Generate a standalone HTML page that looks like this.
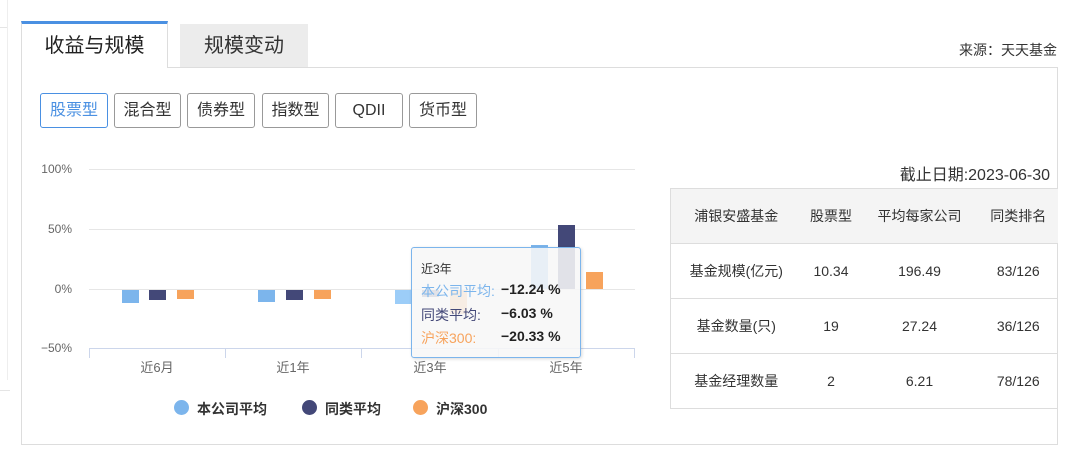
<!DOCTYPE html>
<html><head><meta charset="utf-8"><style>
*{margin:0;padding:0;box-sizing:border-box}
body{width:1069px;height:464px;background:#fff;position:relative;overflow:hidden;font-family:"Liberation Sans","Noto Sans CJK SC",sans-serif;color:#333}
.a{position:absolute}
.box{left:21px;top:67px;width:1037px;height:378px;border:1px solid #ddd}
.tab1{left:21px;top:21px;width:147px;height:47px;background:#fff;border-top:3px solid #4a90e2;border-left:1px solid #ddd;border-right:1px solid #ddd;font-size:20px;text-align:center;line-height:44px;color:#222}
.tab2{left:180px;top:24px;width:128px;height:43px;background:#ececec;font-size:20px;text-align:center;line-height:44px;color:#333}
.btn{top:93px;height:35px;border:1px solid #999;border-radius:3px;font-size:16px;text-align:center;line-height:33px;color:#333;background:#fff}
.yl{width:60px;text-align:right;font-size:12px;color:#666;left:12px}
.gl{left:89px;width:546px;height:1px;background:#e6e6e6}
.bar{width:17px}
.xl{font-size:13px;color:#666;width:80px;text-align:center;top:357px}
.lg{top:399px;font-size:14px;font-weight:bold;color:#333}
.dot{width:15px;height:15px;border-radius:50%;top:400px}
table{border-collapse:collapse;font-size:14px;color:#333;border-left:1px solid #ddd}
td{border-top:1px solid #ddd;border-bottom:1px solid #ddd;height:55px;text-align:center}
</style></head><body>
<div class="a" style="left:0;top:27px;width:8px;height:1px;background:#e5e5e5"></div>
<div class="a" style="left:7px;top:0;width:1px;height:380px;background:#eee"></div>
<div class="a" style="left:0;top:390px;width:10px;height:1px;background:#e5e5e5"></div>
<div class="a box"></div>
<div class="a tab1">收益与规模</div>
<div class="a tab2">规模变动</div>
<div class="a" style="right:12px;top:40px;font-size:14px;color:#333">来源：天天基金</div>

<div class="a btn" style="left:40px;width:68px;border-color:#4a90e2;color:#4a90e2">股票型</div>
<div class="a btn" style="left:114px;width:67px">混合型</div>
<div class="a btn" style="left:187px;width:68px">债券型</div>
<div class="a btn" style="left:262px;width:67px">指数型</div>
<div class="a btn" style="left:335px;width:68px">QDII</div>
<div class="a btn" style="left:409px;width:68px">货币型</div>

<div class="a yl" style="top:162px">100%</div>
<div class="a yl" style="top:222px">50%</div>
<div class="a yl" style="top:282px">0%</div>
<div class="a yl" style="top:341px">−50%</div>
<div class="a gl" style="top:169px"></div>
<div class="a gl" style="top:229px"></div>
<div class="a gl" style="top:289px"></div>
<div class="a" style="left:89px;top:348px;width:546px;height:1px;background:#ccd6eb"></div>
<div class="a" style="left:89px;top:348px;width:1px;height:10px;background:#ccd6eb"></div>
<div class="a" style="left:225px;top:348px;width:1px;height:10px;background:#ccd6eb"></div>
<div class="a" style="left:361px;top:348px;width:1px;height:10px;background:#ccd6eb"></div>
<div class="a" style="left:498px;top:348px;width:1px;height:10px;background:#ccd6eb"></div>
<div class="a" style="left:634px;top:348px;width:1px;height:10px;background:#ccd6eb"></div>

<div class="a bar" style="left:122px;top:290px;height:13px;background:#7cb5ec"></div>
<div class="a bar" style="left:149px;top:290px;height:10px;background:#434878"></div>
<div class="a bar" style="left:177px;top:290px;height:9px;background:#f7a35c"></div>
<div class="a bar" style="left:258px;top:290px;height:12px;background:#7cb5ec"></div>
<div class="a bar" style="left:286px;top:290px;height:10px;background:#434878"></div>
<div class="a bar" style="left:314px;top:290px;height:9px;background:#f7a35c"></div>
<div class="a bar" style="left:395px;top:290px;height:14px;background:#9ccdf8"></div>
<div class="a bar" style="left:422px;top:290px;height:7px;background:#434878"></div>
<div class="a bar" style="left:450px;top:290px;height:24px;background:#f7a35c"></div>
<div class="a bar" style="left:531px;top:245px;height:44px;background:#7cb5ec"></div>
<div class="a bar" style="left:558px;top:225px;height:64px;background:#434878"></div>
<div class="a bar" style="left:586px;top:272px;height:17px;background:#f7a35c"></div>

<div class="a" style="left:411px;top:247px;width:170px;height:111px;background:rgba(247,247,247,0.88);border:1px solid #7cb5ec;border-radius:3px;box-shadow:1px 1px 3px rgba(0,0,0,0.15)">
<div class="a" style="left:9px;top:12px;font-size:12px;color:#333">近3年</div>
<div class="a" style="left:9px;top:33px;font-size:14px;color:#7cb5ec">本公司平均:</div>
<div class="a" style="left:89px;top:33px;font-size:14px;font-weight:bold;color:#222">−12.24 %</div>
<div class="a" style="left:9px;top:57px;font-size:14px;color:#434878">同类平均:</div>
<div class="a" style="left:89px;top:57px;font-size:14px;font-weight:bold;color:#222">−6.03 %</div>
<div class="a" style="left:9px;top:80px;font-size:14px;color:#f7a35c">沪深300:</div>
<div class="a" style="left:89px;top:80px;font-size:14px;font-weight:bold;color:#222">−20.33 %</div>
</div>

<div class="a xl" style="left:117px">近6月</div>
<div class="a xl" style="left:253px">近1年</div>
<div class="a xl" style="left:390px">近3年</div>
<div class="a xl" style="left:526px">近5年</div>

<div class="a dot" style="left:174px;background:#7cb5ec"></div>
<div class="a lg" style="left:197px">本公司平均</div>
<div class="a dot" style="left:302px;background:#434878"></div>
<div class="a lg" style="left:325px">同类平均</div>
<div class="a dot" style="left:413px;background:#f7a35c"></div>
<div class="a lg" style="left:436px">沪深300</div>

<div class="a" style="right:19px;top:161px;font-size:16px;color:#333">截止日期:2023-06-30</div>
<table class="a" style="left:670px;top:188px;width:388px">
<tr style="background:#f4f4f4"><td style="width:131px">浦银安盛基金</td><td style="width:59px">股票型</td><td style="width:118px">平均每家公司</td><td>同类排名</td></tr>
<tr><td>基金规模(亿元)</td><td>10.34</td><td>196.49</td><td>83/126</td></tr>
<tr><td>基金数量(只)</td><td>19</td><td>27.24</td><td>36/126</td></tr>
<tr><td>基金经理数量</td><td>2</td><td>6.21</td><td>78/126</td></tr>
</table>
</body></html>
